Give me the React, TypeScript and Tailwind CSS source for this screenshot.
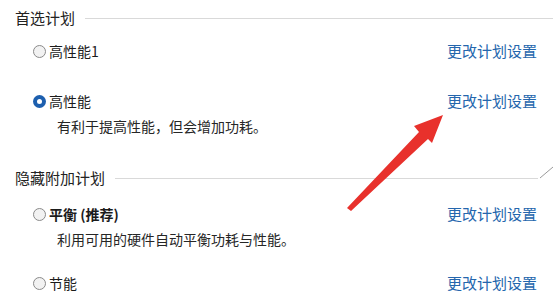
import React from "react";

const font = { fontFamily: '"Noto Sans CJK SC", "Microsoft YaHei", sans-serif' };

function Radio({ checked }: { checked?: boolean }) {
	if (checked) {
		return (
			<span className="w-[13px] h-[13px] rounded-full bg-[#1d5fae] flex items-center justify-center shrink-0">
				<span className="w-[5px] h-[5px] rounded-full bg-white" />
			</span>
		);
	}
	return (
		<span className="w-[13px] h-[13px] rounded-full border border-[#8a8a8a] bg-[#f2f2f2] shrink-0" />
	);
}

function Heading({ label, lineEnd }: { label: string; lineEnd?: string }) {
	return (
		<div className={"flex items-center h-5 pl-[15px] " + (lineEnd ?? "")}>
			<span className="text-[15px] text-[#222] leading-5">{label}</span>
			<div className="flex-1 h-px bg-[#d9d9d9] ml-[10px]" />
		</div>
	);
}

function Plan({
	name,
	desc,
	checked,
	bold,
	descClass,
}: {
	name: string;
	desc?: string;
	checked?: boolean;
	bold?: boolean;
	descClass?: string;
}) {
	return (
		<div>
			<div className="flex items-center h-5 pl-[33px] pr-4">
				<Radio checked={checked} />
				<span
					className={
						"ml-[3px] text-[14px] leading-5 text-[#1b1b1b] " + (bold ? "font-bold" : "")
					}
				>
					{name}
				</span>
				<span className="ml-auto text-[15px] leading-5 text-[#2466ad]">更改计划设置</span>
			</div>
			{desc && (
				<div className={"pl-[57px] text-[14px] leading-5 " + (descClass ?? "text-[#262626] mt-[5px]")}>
					{desc}
				</div>
			)}
		</div>
	);
}

export default function App() {
	return (
		<div className="relative w-[553px] h-[303px] overflow-hidden bg-white" style={font}>
			<div className="pt-2">
				<Heading label="首选计划" />
				<div className="mt-[13px]">
					<Plan name="高性能1" />
				</div>
				<div className="mt-[30px]">
					<Plan name="高性能" checked desc="有利于提高性能，但会增加功耗。" />
				</div>
				<div className="mt-[32px]">
					<Heading label="隐藏附加计划" lineEnd="pr-[15px]" />
				</div>
				<div className="mt-[16px]">
					<Plan name="平衡 (推荐)" bold desc="利用可用的硬件自动平衡功耗与性能。" />
				</div>
				<div className="mt-[24px]">
					<Plan
						name="节能"
						desc="通过尽可能降低计算机性能节能。"
						descClass="text-[#d8d8d8] mt-[6px]"
					/>
				</div>
			</div>
			<svg className="absolute inset-0 pointer-events-none" width="553" height="303">
				<line x1="540" y1="178" x2="553" y2="167" stroke="#9a9a9a" strokeWidth="1" />
				<polygon
					points="347,208 351,211 428,139 432,143 443,115 414,126 419,132"
					fill="#e8312c"
				/>
			</svg>
		</div>
	);
}
